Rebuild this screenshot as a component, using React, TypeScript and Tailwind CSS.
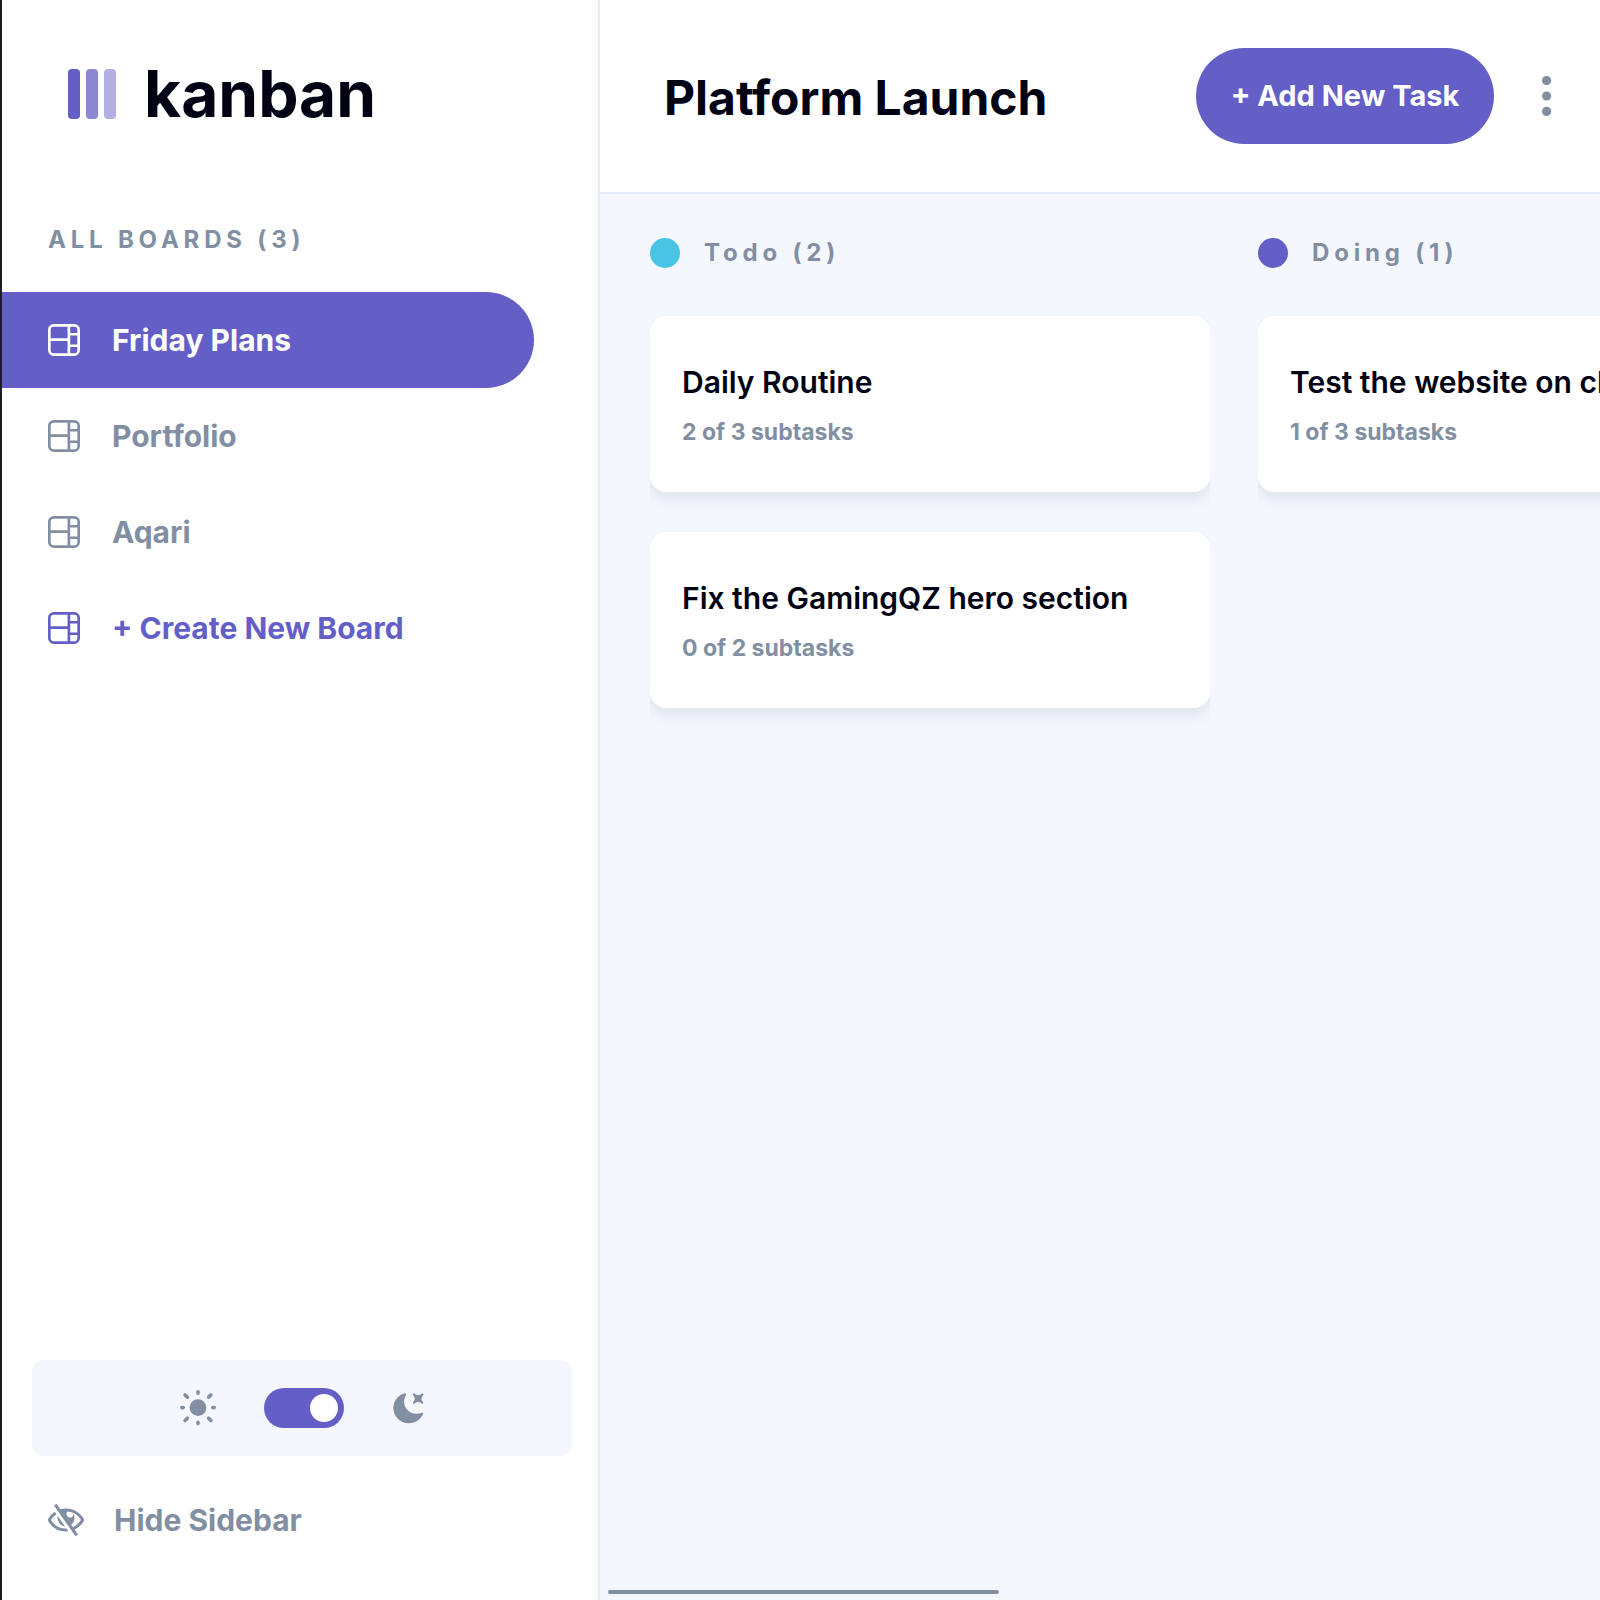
import { useState } from "react";

const boards = ["Friday Plans", "Portfolio", "Aqari"];

const columns = [
  {
    name: "Todo",
    dot: "bg-[#49c4e5]",
    tasks: [
      { title: "Daily Routine", done: 2, total: 3 },
      { title: "Fix the GamingQZ hero section", done: 0, total: 2 },
    ],
  },
  {
    name: "Doing",
    dot: "bg-[#635fc7]",
    tasks: [{ title: "Test the website on chrome", done: 1, total: 3 }],
  },
];

function BoardIcon() {
  return (
    <svg viewBox="0 0 16 16" className="size-8 shrink-0" fill="currentColor" aria-hidden="true">
      <path d="M0 2.889A2.889 2.889 0 0 1 2.889 0H13.11A2.889 2.889 0 0 1 16 2.889V13.11A2.888 2.888 0 0 1 13.111 16H2.89A2.889 2.889 0 0 1 0 13.111V2.89Zm1.333 5.555v4.667c0 .859.697 1.556 1.556 1.556h6.889V8.444H1.333Zm8.445-1.333V1.333h-6.89A1.556 1.556 0 0 0 1.334 2.89V7.11h8.445Zm4.889-1.333H11.11v4.444h3.556V5.778Zm0 5.778H11.11v3.11h2a1.556 1.556 0 0 0 1.556-1.555v-1.555Zm0-7.112V2.89a1.555 1.555 0 0 0-1.556-1.556h-2v3.111h3.556Z" />
    </svg>
  );
}

function SunIcon() {
  return (
    <svg viewBox="0 0 36 36" className="size-9" fill="currentColor" stroke="currentColor" aria-hidden="true">
      <circle cx="18" cy="17.6" r="8.4" stroke="none" />
      <path
        strokeWidth="3.6"
        strokeLinecap="round"
        d="M18 1.8v1.4M18 32.2v1.4M1.8 17.6h1.4M32.8 17.6h1.4M5.1 4.9l2.3 2.3M28.6 28.2l2.3 2.3M5.1 30.5l2.3-2.3M28.6 7.2l2.3-2.3"
      />
    </svg>
  );
}

function MoonIcon() {
  return (
    <svg viewBox="0 0 16 16" className="size-8" fill="currentColor" aria-hidden="true">
      <path d="M6.474.682c.434-.11.718.406.481.78A6.067 6.067 0 0 0 6.01 4.72c0 3.418 2.827 6.187 6.314 6.187.89.002 1.77-.182 2.584-.54.408-.18.894.165.724.57-1.16 2.775-3.944 4.73-7.194 4.73-4.292 0-7.771-3.41-7.771-7.615 0-3.541 2.466-6.518 5.807-7.37Zm8.433.07c.442-.294.969.232.674.674l-.525.787a1.943 1.943 0 0 0 0 2.157l.525.788c.295.441-.232.968-.674.673l-.787-.525a1.943 1.943 0 0 0-2.157 0l-.786.525c-.442.295-.97-.232-.675-.673l.525-.788a1.943 1.943 0 0 0 0-2.157l-.525-.787c-.295-.442.232-.968.674-.673l.787.525a1.943 1.943 0 0 0 2.157 0l.787-.526Z" />
    </svg>
  );
}

function HideIcon() {
  return (
    <svg viewBox="0 0 18 16" className="h-8 w-9 shrink-0" fill="currentColor" aria-hidden="true">
      <path d="M8.522 11.223a4.252 4.252 0 0 1-3.654-5.22l3.654 5.22ZM9 12.25A8.685 8.685 0 0 1 1.5 8a8.612 8.612 0 0 1 2.76-2.864l-.86-1.23A10.112 10.112 0 0 0 .208 7.238a1.5 1.5 0 0 0 0 1.524A10.187 10.187 0 0 0 9 13.75c.414 0 .828-.025 1.239-.074l-1-1.43A8.88 8.88 0 0 1 9 12.25Zm8.792-3.488a10.14 10.14 0 0 1-4.486 4.046l1.504 2.148a.375.375 0 0 1-.092.523l-.648.453a.375.375 0 0 1-.523-.092L3.19 1.044A.375.375 0 0 1 3.282.52L3.93.068a.375.375 0 0 1 .523.092l1.735 2.479A9.308 9.308 0 0 1 9 2.25c3.746 0 7.031 2 8.792 4.988a1.5 1.5 0 0 1 0 1.524ZM16.5 8a8.674 8.674 0 0 0-6.755-4.219A1.75 1.75 0 1 0 12.75 5v-.001a4.25 4.25 0 0 1-1.154 5.366l.834 1.192A8.641 8.641 0 0 0 16.5 8Z" />
    </svg>
  );
}

function DotsIcon() {
  return (
    <svg viewBox="0 0 10 40" className="h-10 w-2.5" fill="currentColor" aria-hidden="true">
      <circle cx="4.6" cy="4.6" r="4.6" />
      <circle cx="4.6" cy="20" r="4.6" />
      <circle cx="4.6" cy="35.4" r="4.6" />
    </svg>
  );
}

function Logo() {
  return (
    <div className="flex items-center gap-7 pt-14 pl-[66px]">
      <svg viewBox="0 0 48 50" className="h-[50px] w-12" fill="#635fc7" aria-hidden="true">
        <rect width="12" height="50" rx="4" />
        <rect x="18" width="12" height="50" rx="4" opacity="0.75" />
        <rect x="36" width="12" height="50" rx="4" opacity="0.5" />
      </svg>
      <span className="text-[64px] leading-[76px] font-bold text-[#000112]">kanban</span>
    </div>
  );
}

export default function App() {
  const [active, setActive] = useState(0);
  const [dark, setDark] = useState(true);

  return (
    <div className="flex min-h-screen overflow-hidden border-l-2 border-[#1d1d20] bg-[#f4f7fd] font-['Inter',sans-serif] font-bold text-[#828fa3]">
      <aside className="flex w-[598px] shrink-0 flex-col border-r-2 border-[#e4ebfa] bg-white">
        <Logo />
        <h2 className="mt-[92px] pl-[46px] text-2xl tracking-[0.2em]">ALL BOARDS (3)</h2>
        <nav className="mt-9 flex flex-col pr-16">
          {boards.map((name, i) => (
            <button
              key={name}
              onClick={() => setActive(i)}
              className={
                i === active
                  ? "flex h-24 items-center gap-8 rounded-r-full bg-[#635fc7] pl-[46px] text-[30px] text-white"
                  : "flex h-24 items-center gap-8 rounded-r-full pl-[46px] text-[30px]"
              }
            >
              <BoardIcon />
              {name}
            </button>
          ))}
          <button className="flex h-24 items-center gap-8 pl-[46px] text-[30px] text-[#635fc7]">
            <BoardIcon />+ Create New Board
          </button>
        </nav>
        <div className="mt-auto mr-[26px] ml-[30px] flex h-24 items-center justify-center gap-12 rounded-xl bg-[#f4f7fd]">
          <SunIcon />
          <input
            type="checkbox"
            role="switch"
            aria-label="Dark mode"
            checked={dark}
            onChange={(e) => setDark(e.target.checked)}
            className="flex h-10 w-20 appearance-none items-center rounded-full bg-[#635fc7] px-1.5 before:size-7 before:rounded-full before:bg-white checked:justify-end"
          />
          <MoonIcon />
        </div>
        <button className="mt-4 mb-8 flex h-24 items-center gap-[30px] pl-[46px] text-[30px]">
          <HideIcon />
          Hide Sidebar
        </button>
      </aside>

      <div className="flex min-w-0 flex-1 flex-col">
        <header className="flex h-[194px] items-center border-b-2 border-[#e4ebfa] bg-white pr-12 pl-16">
          <h1 className="flex-1 pt-1 text-5xl whitespace-nowrap text-[#000112]">Platform Launch</h1>
          <button className="h-24 w-[298px] rounded-full bg-[#635fc7] text-[29px] whitespace-nowrap text-white">
            + Add New Task
          </button>
          <button aria-label="Board options" className="ml-12">
            <DotsIcon />
          </button>
        </header>

        <main className="flex flex-1 gap-12 overflow-hidden pt-[43px] pl-[50px]">
          {columns.map((column) => (
            <section key={column.name} className="flex w-[560px] shrink-0 flex-col">
              <div className="flex items-center gap-6">
                <span className={`size-[30px] rounded-full ${column.dot}`} />
                <h2 className="text-2xl tracking-[0.2em]">
                  {column.name} ({column.tasks.length})
                </h2>
              </div>
              <ul className="mt-[23px] flex flex-col gap-10 overflow-hidden pt-6 pb-10">
                {column.tasks.map((task) => (
                  <li
                    key={task.title}
                    className="flex h-44 flex-col justify-center gap-3.5 rounded-2xl bg-white px-8 pt-0.5 shadow-[0_8px_12px_rgba(54,78,126,0.1)]"
                  >
                    <h3 className="text-[30px] leading-10 font-semibold whitespace-nowrap text-[#000112]">
                      {task.title}
                    </h3>
                    <p className="text-[23px] leading-8">
                      {task.done} of {task.total} subtasks
                    </p>
                  </li>
                ))}
              </ul>
            </section>
          ))}
        </main>
        <div className="mr-[601px] mb-1.5 ml-2 h-1 rounded-full bg-[#828fa3]" />
      </div>
    </div>
  );
}
